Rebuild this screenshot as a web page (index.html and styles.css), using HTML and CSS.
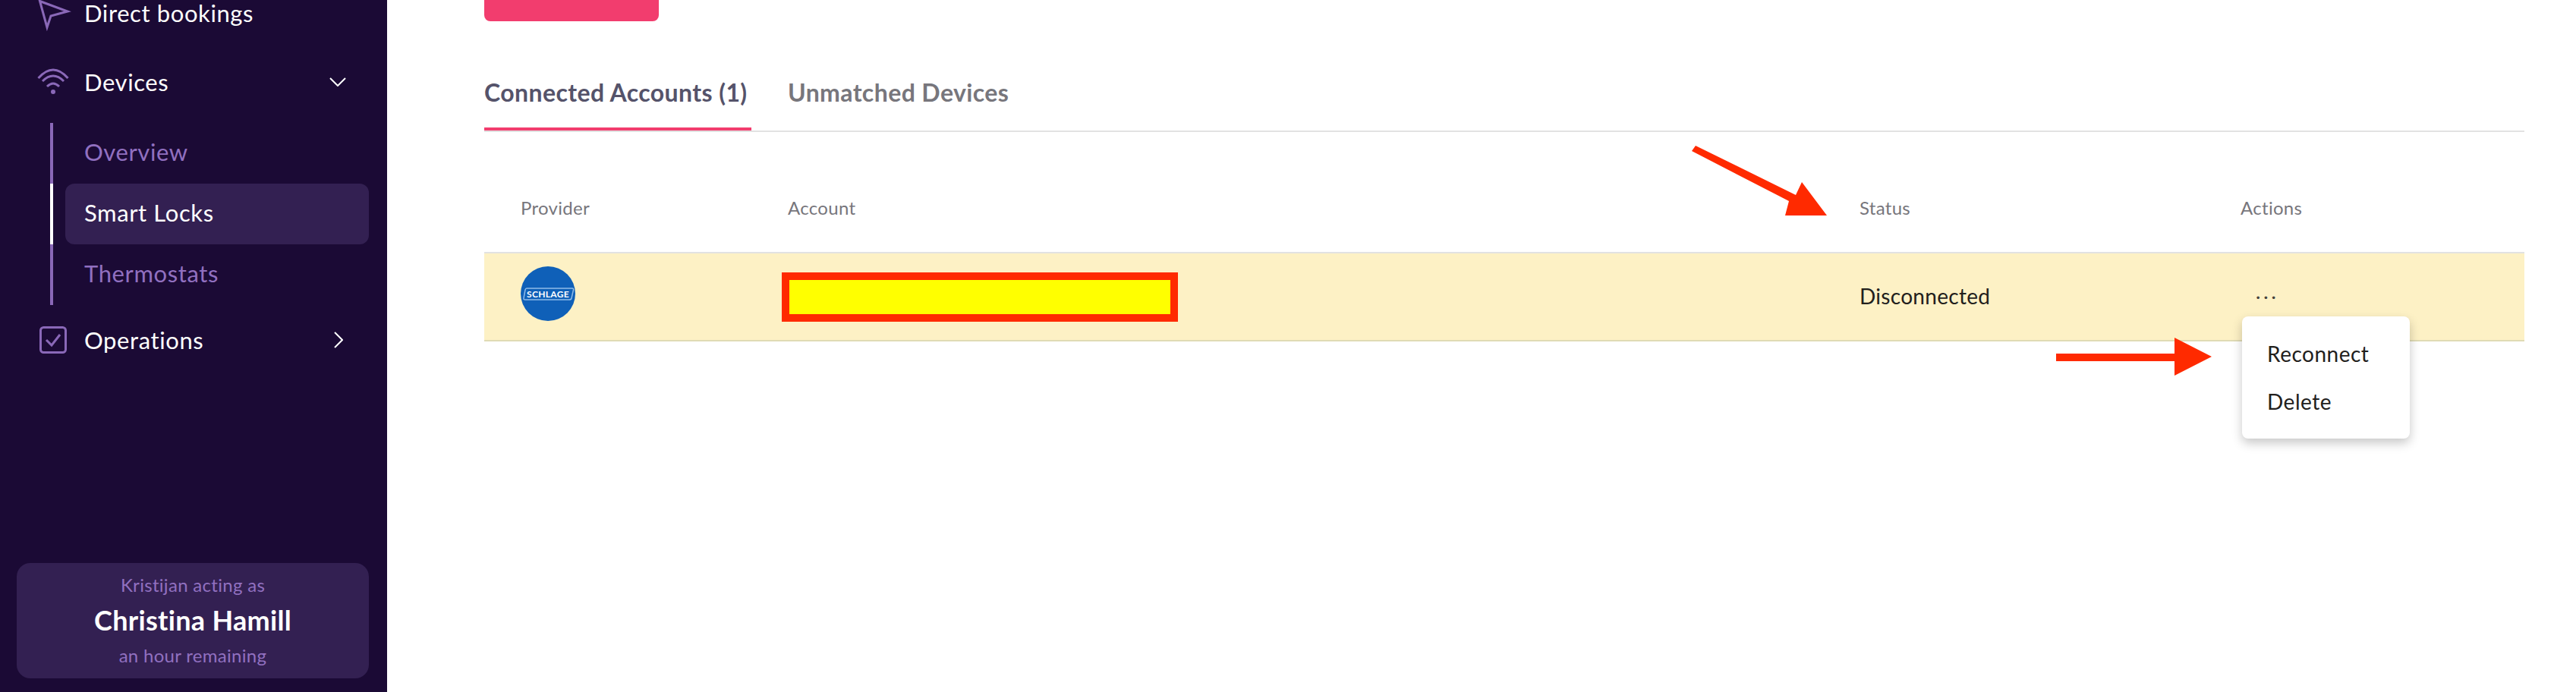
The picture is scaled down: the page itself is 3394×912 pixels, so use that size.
FILE: index.html
```html
<!DOCTYPE html>
<html lang="en-us">
  <head>
    <meta charset="utf-8">
    <title>Smart Locks</title>
    <link rel="stylesheet" href="styles.css">
  </head>
  <body>
    <div class="page">
      <section class="sidebar">
        <a class="nav-item nav-first">
          <svg class="nav-icon icon-send" width="42" height="38" viewBox="0 0 42 38"><path d="M3.5 1.5 40 15 18 21 13 36z"/></svg>
          <span>Direct bookings</span>
        </a>
        <a class="nav-item nav-open">
          <svg class="nav-icon" width="42" height="34" viewBox="0 0 42 34"><path d="M1.5 12Q21-10 40.500 12M7 16Q21 2 35 16M13 23Q21 15 29 23"/><circle class="dot" cx="21" cy="30" r="3"/></svg>
          <span>Devices</span>
          <svg class="chevron" width="22" height="12" viewBox="0 0 22 12"><path d="M1 1 11 11 21 1"/></svg>
        </a>
        <ul class="subnav">
          <li class="sub-item"><a class="sub-link">Overview</a></li>
          <li class="sub-item active"><a class="sub-link">Smart Locks</a></li>
          <li class="sub-item"><a class="sub-link">Thermostats</a></li>
        </ul>
        <a class="nav-item nav-last">
          <svg class="nav-icon icon-check" width="42" height="36" viewBox="0 0 42 36"><rect x="1.500" y="1.500" width="33" height="33" rx="4"/><path d="M9 18 16 25 27 11"/></svg>
          <span>Operations</span>
          <svg class="chevron" width="12" height="22" viewBox="0 0 12 22"><path d="M1 1 11 11 1 21"/></svg>
        </a>
        <div class="acting">
          <div class="acting-note">Kristijan acting as</div>
          <div class="acting-name">Christina Hamill</div>
          <div class="acting-note">an hour remaining</div>
        </div>
      </section>

      <section class="main">
        <div class="add-button"></div>
        <div class="tabs">
          <a class="tab tab-active">Connected Accounts (1)</a>
          <a class="tab">Unmatched Devices</a>
        </div>
        <div class="table-row table-head">
          <div>Provider</div>
          <div>Account</div>
          <div>Status</div>
          <div>Actions</div>
        </div>
        <div class="table-row table-body">
          <div class="cell">
            <svg class="logo" width="72" height="72" viewBox="0 0 72 72">
              <circle cx="36" cy="36" r="36" fill="#0f60b8"/>
              <path d="M8 29H68Q70 29 69.500 31L67 42Q66.500 44 64 44H6Q3.500 44 4 42L6 31Q6.500 29 8 29z" fill="none" stroke="#8fbbe8" stroke-width="1.500"/>
              <text x="36" y="41" text-anchor="middle">SCHLAGE</text>
            </svg>
          </div>
          <div class="cell"><div class="redacted"></div></div>
          <div class="cell cell-text">Disconnected</div>
          <div class="cell cell-actions">
            <span class="dots">···</span>
            <div class="menu">
              <a class="menu-item">Reconnect</a>
              <a class="menu-item">Delete</a>
            </div>
          </div>
        </div>
      </section>
    </div>

    <!-- annotations drawn on top of the screenshot -->
    <svg class="arrows" width="3394" height="912" viewBox="0 0 3394 912">
      <path d="M2234 192 2366 257 2374 240 2407 284 2352 284 2357 265 2229 199z"/>
      <path d="M2709 466H2865V445L2914 470 2865 495V476H2709z"/>
    </svg>
  </body>
</html>
```

FILE: styles.css
```css
* {
  box-sizing: border-box;
  margin: 0;
  padding: 0;
}

body {
  font-family: Lato, "Open Sans", sans-serif;
  font-size: 28px;
  letter-spacing: 0.3px;
  color: #22201c;
  background: #fff;
  overflow: hidden;
}

ul {
  list-style: none;
}

.page {
  display: flex;
  height: 912px;
}

/* sidebar */

.sidebar {
  display: flex;
  flex-direction: column;
  width: 510px;
  flex-shrink: 0;
  background: #1b0a35;
  color: #fff;
}

.nav-item {
  display: flex;
  align-items: center;
  gap: 20px;
  height: 80px;
  padding: 0 54px 0 49px;
  font-size: 31px;
  letter-spacing: 0.6px;
}

.nav-first {
  height: 34px;
  margin-bottom: 34px;
  line-height: 30px;
}

.nav-last {
  margin-top: 6px;
}

.nav-icon {
  flex-shrink: 0;
  overflow: visible;
  fill: none;
  stroke: #8a68b8;
  stroke-width: 3;
}

.icon-send {
  align-self: flex-start;
}

.icon-check {
  margin-left: 3px;
  margin-right: -3px;
}

.nav-icon .dot {
  fill: #8a68b8;
  stroke: none;
}

.chevron {
  margin-left: auto;
  fill: none;
  stroke: #fff;
  stroke-width: 2;
}

.nav-last .chevron {
  margin-right: 4px;
}

.subnav {
  margin: 14px 0 0 66px;
}

.sub-item {
  border-left: 4px solid #8a68b8;
  padding-left: 16px;
  color: #9170c0;
  font-size: 31px;
  letter-spacing: 0.6px;
}

.sub-item.active {
  border-left-color: #fff;
  color: #fff;
}

.sub-link {
  display: flex;
  align-items: center;
  width: 400px;
  height: 80px;
  padding: 0 0 4px 25px;
  border-radius: 12px;
}

.active .sub-link {
  background: #332052;
}

.acting {
  display: flex;
  flex-direction: column;
  justify-content: space-between;
  align-items: center;
  height: 152px;
  margin: auto 24px 18px 22px;
  padding: 14px 0 16px;
  border-radius: 18px;
  background: #332052;
}

.acting-note {
  color: #9170c0;
  font-size: 24px;
}

.acting-name {
  font-size: 36px;
  font-weight: 700;
}

/* main column */

.main {
  flex: 1;
  padding: 0 68px 0 128px;
}

.add-button {
  width: 230px;
  height: 28px;
  background: #f23d6e;
  border-radius: 0 0 8px 8px;
}

.tabs {
  display: flex;
  gap: 48px;
  height: 74px;
  margin-top: 72px;
  border-bottom: 2px solid #e2e2e2;
  font-size: 32px;
  letter-spacing: 0.4px;
  font-weight: 700;
  color: #77767c;
}

.tab {
  height: 72px;
  line-height: 44px;
}

.tab-active {
  width: 352px;
  border-bottom: 4px solid #f23d6e;
  color: #55536a;
}

.table-row {
  display: grid;
  grid-template-columns: 352px 1412px 502px 1fr;
  padding-left: 48px;
}

.table-head {
  padding-top: 82px;
  padding-bottom: 40px;
  border-bottom: 2px solid #e2e2e2;
  font-size: 24px;
  line-height: 36px;
  color: #77767c;
}

.table-body {
  height: 116px;
  border-bottom: 2px solid #e0dbb4;
  background: #fdf1c5;
}

.cell {
  display: flex;
  align-items: center;
  height: 114px;
}

.cell-text {
  padding-bottom: 3px;
}

.logo {
  margin-bottom: 8px;
}

.logo text {
  font-size: 12px;
  font-weight: 700;
  fill: #fff;
}

.redacted {
  width: 522px;
  height: 65px;
  margin-left: -8px;
  border: 10px solid #ff2a00;
  background: #ffff00;
}

.cell-actions {
  position: relative;
}

.dots {
  margin: 0 0 3px 20px;
  font-size: 24px;
  letter-spacing: 4px;
  color: #44423c;
}

.menu {
  position: absolute;
  top: 83px;
  left: 2px;
  display: flex;
  flex-direction: column;
  width: 221px;
  height: 161px;
  padding: 18px 0 0 33px;
  background: #fff;
  border-radius: 8px;
  box-shadow: 0 6px 14px rgba(0, 0, 0, 0.22);
  letter-spacing: 0.5px;
}

.menu-item {
  height: 63px;
  line-height: 62px;
}

.arrows {
  position: absolute;
  top: 0;
  left: 0;
  fill: #ff2a00;
}
```
